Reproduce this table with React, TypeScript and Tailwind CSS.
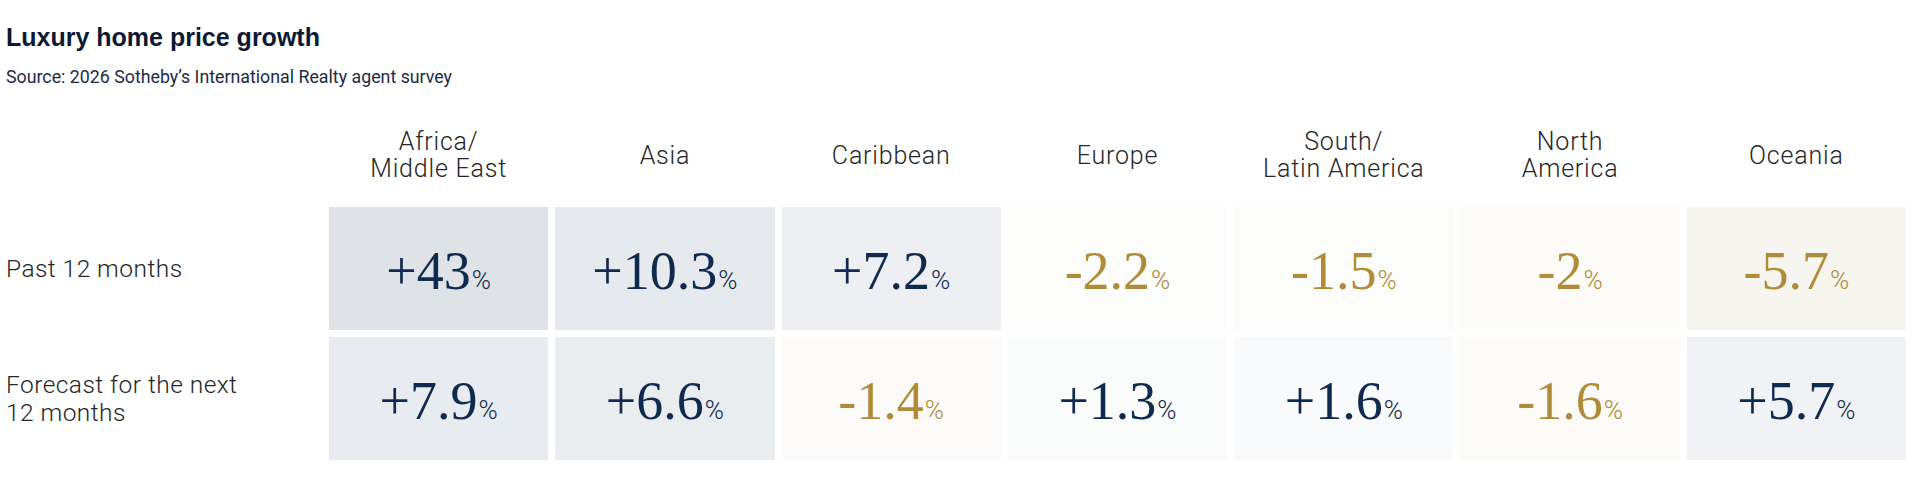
const regions = [
  ['Africa/', 'Middle East'],
  ['Asia'],
  ['Caribbean'],
  ['Europe'],
  ['South/', 'Latin America'],
  ['North', 'America'],
  ['Oceania'],
];

type Cell = { v: string; bg: string };

const rows: { label: string[]; cells: Cell[] }[] = [
  {
    label: ['Past 12 months'],
    cells: [
      { v: '+43', bg: 'bg-[#dfe3e8]' },
      { v: '+10.3', bg: 'bg-[#e6e9ed]' },
      { v: '+7.2', bg: 'bg-[#edeff2]' },
      { v: '-2.2', bg: 'bg-[#fcfcfb]' },
      { v: '-1.5', bg: 'bg-[#fcfcfa]' },
      { v: '-2', bg: 'bg-[#fcfbf8]' },
      { v: '-5.7', bg: 'bg-[#f7f5ef]' },
    ],
  },
  {
    label: ['Forecast for the next', '12 months'],
    cells: [
      { v: '+7.9', bg: 'bg-[#e8ebef]' },
      { v: '+6.6', bg: 'bg-[#eaedf0]' },
      { v: '-1.4', bg: 'bg-[#fcfbf9]' },
      { v: '+1.3', bg: 'bg-[#fafbfb]' },
      { v: '+1.6', bg: 'bg-[#f9fafb]' },
      { v: '-1.6', bg: 'bg-[#fcfbf8]' },
      { v: '+5.7', bg: 'bg-[#f0f2f5]' },
    ],
  },
];

function Value({ v }: { v: string }) {
  const neg = v.startsWith('-');
  return (
    <div className={`flex items-baseline justify-center ${neg ? 'text-[#b08b38]' : 'text-[#0e2a4e]'}`}>
      <span className="font-['Liberation_Serif',serif] text-[54px] leading-none">{v}</span>
      <span className="ml-px font-['Roboto',sans-serif] text-[26px] font-light leading-none">%</span>
    </div>
  );
}

export default function App() {
  return (
    <div className="h-[492px] w-[1920px] bg-white pl-[6px] pr-[14px] pt-[21px] font-['Roboto',sans-serif]">
      <h1 className="font-['Liberation_Sans',sans-serif] text-[25px] font-bold leading-[32px] text-[#0c1a33]">
        Luxury home price growth
      </h1>
      <p className="mt-[12px] text-[17.8px] leading-[24px] text-[#1c2b45]">
        Source: 2026 Sotheby’s International Realty agent survey
      </p>

      <div className="mt-[39px] grid grid-cols-[316px_repeat(7,1fr)] gap-x-[7px]">
        <div />
        {regions.map((r) => (
          <div
            key={r.join(' ')}
            className="flex h-[54px] flex-col items-center justify-center text-center text-[25px] font-light leading-[27px] tracking-[0.8px] text-[#262626]"
          >
            {r.map((l) => (
              <span key={l}>{l}</span>
            ))}
          </div>
        ))}
      </div>

      <div className="mt-[25px] grid grid-cols-[316px_repeat(7,1fr)] gap-x-[7px] gap-y-[7px]">
        {rows.map((row) => (
          <div key={row.label.join(' ')} className="contents">
            <div className="flex h-[123px] flex-col justify-center text-[24.5px] font-light leading-[28px] tracking-[0.45px] text-[#262626]">
              {row.label.map((l) => (
                <span key={l}>{l}</span>
              ))}
            </div>
            {row.cells.map((c, i) => (
              <div key={i} className={`flex h-[123px] items-center justify-center pt-[4px] ${c.bg}`}>
                <Value v={c.v} />
              </div>
            ))}
          </div>
        ))}
      </div>
    </div>
  );
}
